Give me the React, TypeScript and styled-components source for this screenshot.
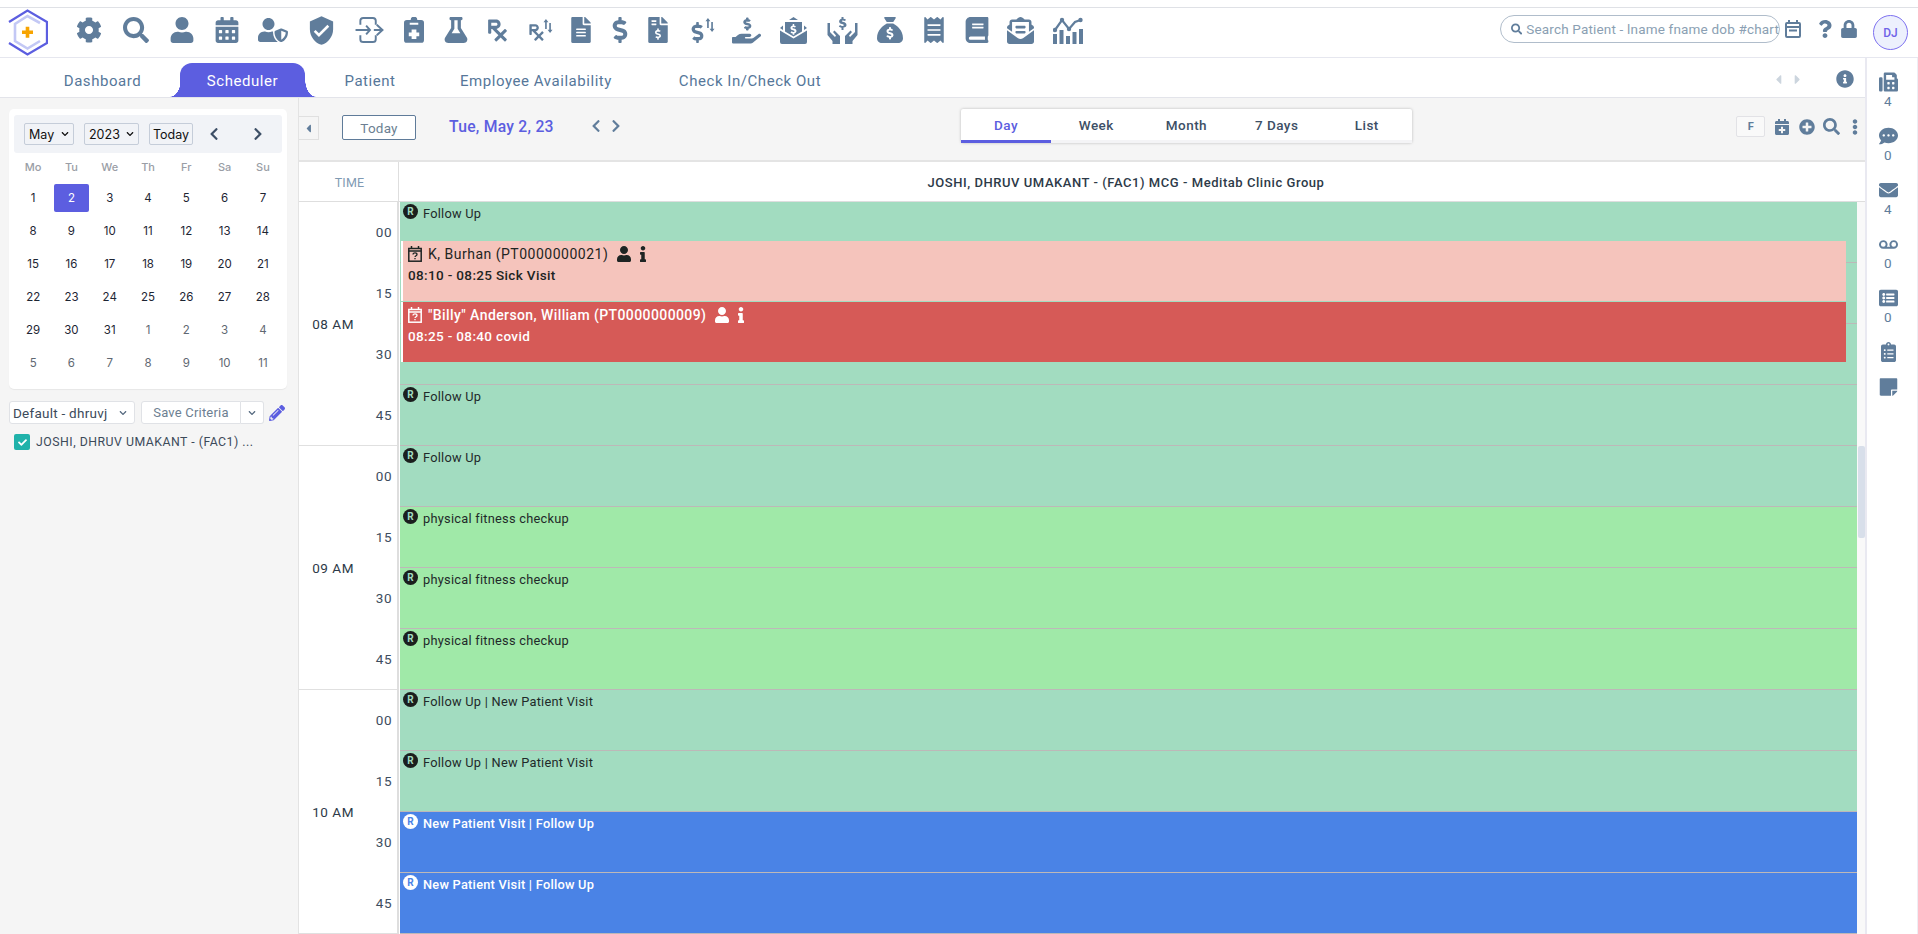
import React from 'react';
import styled, { createGlobalStyle } from 'styled-components';
import {
  FaBook,
  FaCalendarAlt,
  FaCalendarPlus,
  FaCaretLeft,
  FaCaretRight,
  FaChevronDown,
  FaChevronLeft,
  FaChevronRight,
  FaCheck,
  FaClipboardList,
  FaCommentDots,
  FaDollarSign,
  FaEllipsisV,
  FaEnvelope,
  FaEnvelopeOpenText,
  FaFax,
  FaFileAlt,
  FaFileInvoiceDollar,
  FaFlask,
  FaHandHoldingUsd,
  FaInfo,
  FaInfoCircle,
  FaListAlt,
  FaLock,
  FaPencilAlt,
  FaPlusCircle,
  FaPrescription,
  FaQuestion,
  FaReceipt,
  FaSearch,
  FaStickyNote,
  FaUser,
  FaUserShield,
  FaVoicemail,
  FaCog,
} from 'react-icons/fa';
import { FaSackDollar } from 'react-icons/fa6';
import { MdVerifiedUser } from 'react-icons/md';

const GlobalStyle = createGlobalStyle`
  html, body {
    margin: 0;
    padding: 0;
    background: #fff;
    overflow: hidden;
  }
  body {
    font-family: 'Roboto', 'Liberation Sans', sans-serif;
    color: #1f2a37;
  }
  * { box-sizing: border-box; }
`;

const ICON = '#607d9b';

const Page = styled.div`
  width: 1918px;
  height: 934px;
  display: flex;
  flex-direction: column;
  padding-top: 7px;
  overflow: hidden;
`;

const TopBar = styled.header`
  height: 51px;
  flex: none;
  display: flex;
  align-items: center;
  border-top: 1px solid #dfe1e6;
  border-bottom: 1px solid #e6e7ef;
  padding: 0 10px 0 8px;
  color: ${ICON};
`;

const Logo = styled.svg`
  width: 40px;
  height: 47px;
  margin-right: 16.8px;
  flex: none;
`;

const IconStrip = styled.nav`
  display: flex;
  align-items: center;
  font-size: 26px;
  margin-top: -5px;
  svg {
    display: block;
    flex: none;
  }
`;

const IconCell = styled.span<{ $width: number }>`
  width: ${(p) => p.$width}px;
  height: 30px;
  flex: none;
  display: flex;
  align-items: center;
  justify-content: center;
`;

const StackedIcon = styled.span<{ $size: number }>`
  display: flex;
  align-items: flex-start;
  font-size: ${(p) => p.$size}px;
  svg:first-child {
    margin-top: 4px;
  }
  svg:last-child {
    margin-left: -3px;
    margin-top: 0;
  }
`;

const TopRight = styled.div`
  margin-left: auto;
  display: flex;
  align-items: center;
  color: ${ICON};
`;

const SearchBox = styled.div`
  width: 280px;
  height: 28px;
  border: 1px solid #b0bdcb;
  border-radius: 14px;
  display: flex;
  align-items: center;
  gap: 4px;
  padding-left: 10px;
  font-size: 13.5px;
  letter-spacing: 0.18px;
  color: #8b9fb3;
  white-space: nowrap;
  margin-top: -7px;
  svg {
    color: ${ICON};
    font-size: 12px;
  }
`;

const TopAction = styled.span<{ $left: number }>`
  margin-left: ${(p) => p.$left}px;
  margin-top: -7px;
  font-size: 18px;
  display: flex;
`;

const Avatar = styled.div`
  width: 35px;
  height: 35px;
  margin-left: 15px;
  border-radius: 50%;
  border: 1px solid #7d70f0;
  background: #edf0fd;
  color: #6f63e8;
  display: flex;
  align-items: center;
  justify-content: center;
  font-size: 12px;
  font-weight: 500;
`;

const Workspace = styled.div`
  flex: 1;
  min-height: 0;
  display: flex;
`;

const WorkColumn = styled.div`
  width: 1865px;
  flex: none;
  display: flex;
  flex-direction: column;
`;

const TabBar = styled.div`
  height: 40px;
  flex: none;
  display: flex;
  align-items: flex-end;
  padding: 0 11px 0 64px;
  border-bottom: 1px solid #e3e4ea;
`;

const Tab = styled.div<{ $width: number; $left?: number; $active?: boolean }>`
  width: ${(p) => p.$width}px;
  margin-left: ${(p) => p.$left ?? 0}px;
  height: 34px;
  flex: none;
  display: flex;
  align-items: center;
  justify-content: center;
  font-size: 15px;
  letter-spacing: 0.55px;
  padding-top: 1px;
  white-space: nowrap;
  color: ${(p) => (p.$active ? '#fff' : '#56779a')};
  background: ${(p) => (p.$active ? '#5c5ee0' : 'transparent')};
  border-radius: ${(p) => (p.$active ? '12px 12px 0 0' : '0')};
  position: relative;
  ${(p) =>
    p.$active &&
    `
    &::before, &::after {
      content: '';
      position: absolute;
      bottom: 0;
      width: 11px;
      height: 18px;
      background: radial-gradient(ellipse 11px 18px at 0 0, transparent 97%, #5c5ee0 100%);
    }
    &::before { left: -10.5px; }
    &::after {
      right: -10.5px;
      background: radial-gradient(ellipse 11px 18px at 100% 0, transparent 97%, #5c5ee0 100%);
    }
  `}
`;

const TabTools = styled.div`
  margin-left: auto;
  height: 100%;
  display: flex;
  align-items: center;
  color: #ccd5de;
  font-size: 15px;
  gap: 4px;
  padding-top: 3px;
  svg:last-child {
    color: ${ICON};
    font-size: 18px;
    margin-left: 27px;
  }
`;

const Body = styled.div`
  flex: 1;
  min-height: 0;
  display: flex;
`;

const Sidebar = styled.aside`
  width: 299px;
  flex: none;
  background: #f5f5f5;
  border-right: 1px solid #e3e3e3;
  padding: 11px 11px 0 9px;
`;

const CalendarCard = styled.div`
  background: #fff;
  border-radius: 5px;
  height: 280px;
  padding: 6px 5px;
  box-shadow: 0 1px 1px rgba(0, 0, 0, 0.06);
`;

const CalendarHead = styled.div`
  height: 38px;
  background: #f1f3f7;
  border-radius: 3px;
  display: flex;
  align-items: center;
  padding-left: 10px;
  color: #3d4f66;
  font-size: 14px;
`;

const MiniSelect = styled.div<{ $width: number; $left?: number; $centered?: boolean }>`
  width: ${(p) => p.$width}px;
  margin-left: ${(p) => p.$left ?? 0}px;
  height: 22px;
  border: 1px solid #c5cdd9;
  border-radius: 2px;
  display: flex;
  align-items: center;
  justify-content: ${(p) => (p.$centered ? 'center' : 'space-between')};
  padding: 0 4px;
  font-family: 'Inter', sans-serif;
  font-size: 12.5px;
  color: #111;
  svg {
    font-size: 8px;
  }
`;

const NavChevron = styled.span<{ $left: number }>`
  margin-left: ${(p) => p.$left}px;
  display: flex;
`;

const DayGrid = styled.div`
  display: grid;
  grid-template-columns: repeat(7, 38.3px);
  grid-template-rows: 28px repeat(6, 33px);
  justify-items: center;
  align-items: center;
  font-family: 'Inter', sans-serif;
  font-size: 11.5px;
`;

const DayName = styled.span`
  color: #9a9ea6;
  font-weight: 500;
  font-size: 11px;
`;

const Day = styled.span<{ $muted?: boolean; $selected?: boolean }>`
  width: 35px;
  height: 28px;
  display: flex;
  align-items: center;
  justify-content: center;
  border-radius: 2px;
  color: ${(p) => (p.$selected ? '#fff' : p.$muted ? '#5f6872' : '#1d2533')};
  background: ${(p) => (p.$selected ? '#5c5ee0' : 'transparent')};
`;

const CriteriaRow = styled.div`
  display: flex;
  align-items: center;
  margin-top: 12px;
  height: 23px;
  color: #3c4a5a;
  font-size: 13.5px;
`;

const CriteriaSelect = styled.div`
  width: 126px;
  height: 23px;
  background: #fff;
  border: 1px solid #e0e2e6;
  border-radius: 3px;
  display: flex;
  align-items: center;
  justify-content: space-between;
  padding: 0 7px 0 3px;
  letter-spacing: 0.25px;
  svg {
    font-size: 8px;
    color: #55697f;
  }
`;

const SaveButton = styled.div`
  width: 100px;
  height: 23px;
  margin-left: 6px;
  background: #fff;
  border: 1px solid #e0e2e6;
  border-radius: 3px 0 0 3px;
  display: flex;
  align-items: center;
  justify-content: center;
  color: #6d7f92;
  font-size: 13px;
  letter-spacing: 0.2px;
`;

const SaveCaret = styled.div`
  width: 23px;
  height: 23px;
  background: #fff;
  border: 1px solid #e0e2e6;
  border-left: 0;
  border-radius: 0 3px 3px 0;
  display: flex;
  align-items: center;
  justify-content: center;
  color: #55697f;
  font-size: 8px;
`;

const EditIcon = styled.span`
  margin-left: 5px;
  color: #5c5ee0;
  font-size: 16px;
  display: flex;
`;

const ProviderRow = styled.div`
  display: flex;
  align-items: center;
  gap: 6px;
  margin: 10px 0 0 5px;
  font-size: 12.3px;
  letter-spacing: 0.5px;
  color: #3c4a5a;
  white-space: nowrap;
`;

const CheckBox = styled.span`
  width: 16px;
  height: 16px;
  border-radius: 2px;
  background: #20b2aa;
  color: #fff;
  display: flex;
  align-items: center;
  justify-content: center;
  font-size: 9px;
`;

const Main = styled.main`
  flex: 1;
  min-width: 0;
  display: flex;
  flex-direction: column;
`;

const Toolbar = styled.div`
  height: 64px;
  flex: none;
  background: #f5f5f5;
  border-bottom: 2px solid #e4e4e4;
  display: flex;
  align-items: flex-start;
  color: ${ICON};
`;

const CollapseButton = styled.div`
  width: 20px;
  height: 24px;
  margin-top: 18px;
  border: 1px solid #e0e0e0;
  border-left: 0;
  display: flex;
  align-items: center;
  justify-content: center;
  font-size: 13px;
`;

const TodayButton = styled.div`
  width: 74px;
  height: 25px;
  margin: 17px 0 0 23px;
  background: #fff;
  border: 1px solid #5f7b99;
  border-radius: 2px;
  display: flex;
  align-items: center;
  justify-content: center;
  font-size: 13.5px;
  letter-spacing: 0.2px;
  color: #6c7f92;
`;

const DateLabel = styled.div`
  margin: 18px 0 0 33px;
  width: 140px;
  font-size: 15.7px;
  line-height: 22px;
  font-weight: 500;
  letter-spacing: 0.25px;
  color: #5c5ee0;
`;

const DateNav = styled.div`
  display: flex;
  gap: 6px;
  margin: 21px 0 0 0;
  font-size: 14px;
`;

const Segments = styled.div`
  width: 451px;
  height: 34px;
  margin: 11px 0 0 338px;
  background: #fff;
  border-radius: 2px;
  box-shadow: 0 0 3px rgba(0, 0, 0, 0.25);
  display: flex;
`;

const Segment = styled.div<{ $active?: boolean }>`
  width: 90.2px;
  display: flex;
  align-items: center;
  justify-content: center;
  font-size: 13.5px;
  letter-spacing: 0.45px;
  font-weight: 500;
  color: ${(p) => (p.$active ? '#5c5ee0' : '#3d4f66')};
  border-bottom: 3px solid ${(p) => (p.$active ? '#5c5ee0' : '#f4f4f6')};
`;

const ViewTools = styled.div`
  margin-left: auto;
  margin-top: 18px;
  padding-right: 7px;
  display: flex;
  align-items: center;
  gap: 8.7px;
  font-size: 16px;
`;

const FButton = styled.div`
  width: 29px;
  height: 21px;
  border: 1px solid #e2e2e6;
  border-radius: 2px;
  background: #f9f9f9;
  display: flex;
  align-items: center;
  justify-content: center;
  font-size: 11px;
  font-weight: 700;
`;

const DotsIcon = styled(FaEllipsisV)`
  margin-left: 3px;
  font-size: 18px;
  width: 6px;
`;

const GridHead = styled.div`
  height: 40px;
  flex: none;
  display: flex;
  border-bottom: 1px solid #dedede;
  padding-right: 8px;
`;

const TimeHead = styled.div`
  width: 100px;
  flex: none;
  border-right: 1px solid #dedede;
  display: flex;
  align-items: center;
  justify-content: center;
  padding: 1px 0 0 2px;
  font-size: 12.5px;
  letter-spacing: 0.2px;
  color: #7f9ab3;
`;

const ProviderHead = styled.div`
  flex: 1;
  display: flex;
  align-items: center;
  justify-content: center;
  font-size: 13px;
  font-weight: 500;
  letter-spacing: 0.55px;
  color: #2d3a48;
  padding: 2px 4px 0 0;
`;

const GridScroll = styled.div`
  flex: 1;
  min-height: 0;
  display: flex;
  position: relative;
  padding-right: 8px;
  overflow: hidden;
`;

const ScrollTrack = styled.div`
  position: absolute;
  right: 0;
  top: 0;
  bottom: 0;
  width: 8px;
  background: #f9f9f9;
`;

const ScrollThumb = styled.div`
  position: absolute;
  right: 0;
  top: 244px;
  width: 7px;
  height: 92px;
  border-radius: 2px;
  background: #d8dfea;
`;

const TimeColumn = styled.div`
  width: 100px;
  flex: none;
  border-right: 2px solid #dedede;
`;

const HourBlock = styled.div`
  height: 244px;
  display: flex;
  border-bottom: 1px solid #e0e0e0;
`;

const HourLabel = styled.div`
  width: 55px;
  flex: none;
  display: flex;
  align-items: center;
  justify-content: flex-end;
  font-size: 13.5px;
  letter-spacing: 0.55px;
  color: #2d3a48;
`;

const QuarterColumn = styled.div`
  flex: 1;
  display: grid;
  grid-template-rows: repeat(4, 61px);
`;

const QuarterLabel = styled.div`
  display: flex;
  align-items: center;
  justify-content: flex-end;
  padding: 0 5px 2px 0;
  font-size: 13.5px;
  letter-spacing: 0.5px;
  color: #3d4d5e;
`;

const SlotColumn = styled.div`
  flex: 1;
  min-width: 0;
  position: relative;
  margin-left: 1px;
`;

const Slot = styled.div<{ $bg: string; $light?: boolean }>`
  height: 61px;
  background: ${(p) => p.$bg};
  border-bottom: 1px solid #bdb8b8;
  display: flex;
  align-items: flex-start;
  gap: 5px;
  padding: 2px 3px;
  font-size: 12.8px;
  line-height: 15px;
  letter-spacing: 0.25px;
  font-weight: ${(p) => (p.$light ? 500 : 400)};
  color: ${(p) => (p.$light ? '#fff' : '#1f2a2a')};
`;

const SlotText = styled.span`
  margin-top: 2px;
`;

const RBadge = styled.span<{ $light?: boolean }>`
  width: 15px;
  height: 15px;
  flex: none;
  border-radius: 50%;
  display: flex;
  align-items: center;
  justify-content: center;
  font-size: 10px;
  font-weight: 700;
  background: ${(p) => (p.$light ? '#fff' : '#1b1f1e')};
  color: ${(p) => (p.$light ? '#4a83e6' : '#a2dcc0')};
`;

const Appointment = styled.div<{ $top: number; $bg: string; $light?: boolean }>`
  position: absolute;
  left: 1px;
  top: ${(p) => p.$top}px;
  width: 1445px;
  height: 60px;
  background: ${(p) => p.$bg};
  border-left: 2px solid #fff;
  padding: 3px 5px;
  color: ${(p) => (p.$light ? '#fff' : '#1e2423')};
  font-weight: ${(p) => (p.$light ? 500 : 400)};
`;

const ApptTitle = styled.div<{ $tight?: boolean }>`
  display: flex;
  align-items: center;
  gap: 6px;
  height: 20px;
  font-size: 14px;
  letter-spacing: ${(p) => (p.$tight ? 0.4 : 0.5)}px;
  white-space: nowrap;
  svg {
    flex: none;
  }
`;

const ApptIcons = styled.span`
  display: flex;
  align-items: center;
  gap: 3px;
  margin-left: 2px;
  font-size: 16px;
`;

const ApptTime = styled.div`
  margin-top: 3px;
  font-size: 13.5px;
  font-weight: 500;
  letter-spacing: 0.35px;
`;

const Rail = styled.aside`
  width: 53px;
  flex: none;
  border-left: 2px solid #e9e9f1;
  border-right: 1px solid #eeeef4;
  padding: 14px 8px 0 0;
  display: flex;
  flex-direction: column;
  align-items: center;
  color: ${ICON};
`;

const RailItem = styled.div<{ $short?: boolean }>`
  height: ${(p) => (p.$short ? 35 : 54)}px;
  width: 100%;
  display: flex;
  flex-direction: column;
  align-items: center;
  font-size: 13.5px;
  letter-spacing: 0.2px;
  line-height: 15px;
  svg {
    font-size: 19px;
    height: 20px;
    margin-bottom: 2px;
  }
`;

const Brand = () => (
  <Logo viewBox="0 0 40 47">
    <path d="M1 13 19.500 1.500 39 13v21L19.500 45.500 1 34" fill="none" stroke="#5c5ee0" strokeWidth="2.300" />
    <path d="M32 14 19.500 7 7 15v17l12.500 7.500L32 32" fill="none" stroke="#c3c8f5" strokeWidth="2.600" />
    <path d="M17.700 17.800h3.600v3.700H25v3.600h-3.700v3.700h-3.600v-3.700H14v-3.600h3.700z" fill="#f7a400" />
  </Logo>
);

const SignInIcon = () => (
  <svg width="29" height="26" viewBox="0 0 29 27" fill="none" stroke="currentColor" strokeWidth="2">
    <path d="M5 8V4a3 3 0 0 1 3-3h10a3 3 0 0 1 3 3v4M5 19v4a3 3 0 0 0 3 3h10a3 3 0 0 0 3-3v-4" />
    <path d="M0 13.500h14M19 13.500h9M22 8l6 5.500-6 5.500M11 9l4 4.500-4 4.500" />
  </svg>
);

const ClipboardPlusIcon = () => (
  <svg width="20" height="26" viewBox="0 0 21 27" fill="currentColor">
    <path fillRule="evenodd" d="M3 3h4a3.500 3.500 0 0 1 7 0h4a3 3 0 0 1 3 3v18a3 3 0 0 1-3 3H3a3 3 0 0 1-3-3V6a3 3 0 0 1 3-3Zm5 10v3H5v4h3v3h5v-3h3v-4h-3v-3ZM6 6v2h9V6Z" />
  </svg>
);

const ArrowPair = () => (
  <svg width="10" height="14" viewBox="0 0 11 17" fill="currentColor">
    <path d="M3 0 6 4H4v8H2V4H0ZM8 17l-3-4h2V5h2v8h2Z" />
  </svg>
);

const EnvelopeDollarIcon = () => (
  <svg width="27" height="27" viewBox="0 0 27 27" fill="currentColor">
    <path d="M13.500 0 18 3h-9ZM0 11l3-2.500V13L0 11ZM27 11l-3-2.500V13ZM0 13.500l13.500 8 13.500-8V25a2 2 0 0 1-2 2H2a2 2 0 0 1-2-2Z" />
    <path fillRule="evenodd" d="M5 5h17v9.500l-8.500 5-8.500-5Zm9.300 2h-1.600v1.400c-1.500.4-2.300 1.400-2.200 2.500 0 1.600 1.400 2.100 2.600 2.400 1 .3 1.500.5 1.500 1 0 .5-.6.700-1.200.7-.7 0-1.400-.3-1.900-.7l-1 1.200c.6.500 1.300.9 2.200 1v1.200h1.600v-1.200c1.400-.3 2.200-1.200 2.200-2.400 0-1.700-1.500-2.200-2.700-2.500-1-.3-1.400-.5-1.400-.9 0-.4.500-.6 1-.6.600 0 1.100.2 1.600.5l.9-1.200c-.6-.4-1.200-.7-1.900-.8Z" />
  </svg>
);

const HandsDollarIcon = () => (
  <svg width="33" height="27" viewBox="0 0 32 27" fill="currentColor">
    <path d="M1 6h2.500v9l5 5 1-1.500-3-3.500 1.500-1.500 5.500 5.500V27H6v-3L1 18ZM31 6h-2.500v9l-5 5-1-1.500 3-3.500-1.500-1.500-5.500 5.500V27H26v-3l5-6Z" />
    <path d="M15 0h2v1.700c1 .1 1.800.5 2.500 1l-1 1.400c-.6-.4-1.300-.7-2-.7-.7 0-1.200.3-1.200.7 0 .5.500.7 1.700 1 1.500.4 3 1 3 2.800 0 1.400-1 2.400-3 2.700V13h-2v-2.300c-1.100-.2-2-.6-2.700-1.200l1.200-1.400c.7.500 1.500.9 2.400.9.800 0 1.400-.3 1.400-.8s-.6-.8-1.800-1.100c-1.500-.4-2.900-1-2.900-2.700 0-1.400 1.100-2.400 2.400-2.700Z" />
  </svg>
);

const ChartIcon = () => (
  <svg width="30" height="27" viewBox="0 0 30 27" fill="currentColor">
    <path d="M0 17h4v10H0ZM6.500 13h4v14h-4ZM13 19h4v8h-4ZM19.500 15h4v12h-4ZM26 12h4v15h-4Z" />
    <path d="M2 13 9 3l7 9 6-7 5.500-2" fill="none" stroke="currentColor" strokeWidth="2.200" />
    <circle cx="2" cy="13" r="2.200" />
    <circle cx="9" cy="3" r="2.200" />
    <circle cx="16" cy="12" r="2.200" />
    <circle cx="27.500" cy="3" r="2.200" />
  </svg>
);

const CalendarMinusIcon = () => (
  <svg width="16" height="18" viewBox="0 0 16 18" fill="none" stroke="currentColor" strokeWidth="2">
    <rect x="1" y="3" width="14" height="14" rx="1" />
    <path d="M1 7h14M4 0v3M12 0v3M4 10.500h8" />
  </svg>
);

const CalendarQuestionIcon = () => (
  <svg width="14" height="16" viewBox="0 0 14 16" fill="none" stroke="currentColor" strokeWidth="1.500">
    <rect x=".8" y="2.500" width="12.400" height="12.700" />
    <path d="M3.500 0v3M10.500 0v3M.8 5h12.400" />
    <path d="M5 8.500c0-1.200 1-1.700 2-1.700s2 .6 2 1.600c0 1.300-2 1.300-2 2.700M7 12v1.300" strokeWidth="1.300" />
  </svg>
);

const topIcons: [React.ReactNode, number][] = [
  [<FaCog />, 48],
  [<FaSearch />, 47.2],
  [<FaUser />, 44.5],
  [<FaCalendarAlt />, 45],
  [<FaUserShield size={30} />, 48],
  [<MdVerifiedUser size={31} />, 48.5],
  [<SignInIcon />, 46.5],
  [<ClipboardPlusIcon />, 43],
  [<FaFlask />, 41.5],
  [<FaPrescription size={25} />, 42],
  [
    <StackedIcon $size={19}>
      <FaPrescription />
      <ArrowPair />
    </StackedIcon>,
    42.5,
  ],
  [<FaFileAlt />, 40],
  [<FaDollarSign />, 37],
  [<FaFileInvoiceDollar />, 40],
  [
    <StackedIcon $size={21}>
      <FaDollarSign />
      <ArrowPair />
    </StackedIcon>,
    45,
  ],
  [<FaHandHoldingUsd size={29} />, 46.5],
  [<EnvelopeDollarIcon />, 48],
  [<HandsDollarIcon />, 49.5],
  [<FaSackDollar size={26} />, 46],
  [<FaReceipt />, 42],
  [<FaBook />, 42.5],
  [<FaEnvelopeOpenText size={27} />, 46],
  [<ChartIcon />, 48],
];

const weeks: [number, boolean][][] = [
  [1, 2, 3, 4, 5, 6, 7].map((d) => [d, false]),
  [8, 9, 10, 11, 12, 13, 14].map((d) => [d, false]),
  [15, 16, 17, 18, 19, 20, 21].map((d) => [d, false]),
  [22, 23, 24, 25, 26, 27, 28].map((d) => [d, false]),
  [29, 30, 31].map((d) => [d, false] as [number, boolean]).concat([1, 2, 3, 4].map((d) => [d, true])),
  [5, 6, 7, 8, 9, 10, 11].map((d) => [d, true]),
];

const GREEN = '#a2dcc0';
const LIME = '#a0e9a8';
const BLUE = '#4a83e6';

const slots = [
  { bg: GREEN, text: 'Follow Up' },
  { bg: GREEN, text: '' },
  { bg: GREEN, text: '' },
  { bg: GREEN, text: 'Follow Up' },
  { bg: GREEN, text: 'Follow Up' },
  { bg: LIME, text: 'physical fitness checkup' },
  { bg: LIME, text: 'physical fitness checkup' },
  { bg: LIME, text: 'physical fitness checkup' },
  { bg: GREEN, text: 'Follow Up | New Patient Visit' },
  { bg: GREEN, text: 'Follow Up | New Patient Visit' },
  { bg: BLUE, text: 'New Patient Visit | Follow Up', light: true },
  { bg: BLUE, text: 'New Patient Visit | Follow Up', light: true },
];

export default function App() {
  return (
    <Page>
      <GlobalStyle />
      <TopBar>
        <Brand />
        <IconStrip>
          {topIcons.map(([icon, width], i) => (
            <IconCell key={i} $width={width}>
              {icon}
            </IconCell>
          ))}
        </IconStrip>
        <TopRight>
          <SearchBox>
            <FaSearch />
            Search Patient - lname fname dob #chart
          </SearchBox>
          <TopAction $left={5}>
            <CalendarMinusIcon />
          </TopAction>
          <TopAction $left={14.5}>
            <FaQuestion />
          </TopAction>
          <TopAction $left={6.5}>
            <FaLock />
          </TopAction>
          <Avatar>DJ</Avatar>
        </TopRight>
      </TopBar>

      <Workspace>
        <WorkColumn>
          <TabBar>
            <Tab $width={77}>Dashboard</Tab>
            <Tab $width={125} $left={39} $active>
              Scheduler
            </Tab>
            <Tab $width={50} $left={40}>
              Patient
            </Tab>
            <Tab $width={150} $left={66}>
              Employee Availability
            </Tab>
            <Tab $width={144} $left={67}>
              Check In/Check Out
            </Tab>
            <TabTools>
              <FaCaretLeft />
              <FaCaretRight />
              <FaInfoCircle />
            </TabTools>
          </TabBar>

          <Body>
            <Sidebar>
              <CalendarCard>
                <CalendarHead>
                  <MiniSelect $width={50}>
                    May <FaChevronDown />
                  </MiniSelect>
                  <MiniSelect $width={55} $left={10}>
                    2023 <FaChevronDown />
                  </MiniSelect>
                  <MiniSelect $width={44} $left={10} $centered>
                    Today
                  </MiniSelect>
                  <NavChevron $left={14}>
                    <FaChevronLeft />
                  </NavChevron>
                  <NavChevron $left={30}>
                    <FaChevronRight />
                  </NavChevron>
                </CalendarHead>
                <DayGrid>
                  {['Mo', 'Tu', 'We', 'Th', 'Fr', 'Sa', 'Su'].map((d) => (
                    <DayName key={d}>{d}</DayName>
                  ))}
                  {weeks.flat().map(([d, muted], i) => (
                    <Day key={i} $muted={muted} $selected={i === 1}>
                      {d}
                    </Day>
                  ))}
                </DayGrid>
              </CalendarCard>
              <CriteriaRow>
                <CriteriaSelect>
                  Default - dhruvj <FaChevronDown />
                </CriteriaSelect>
                <SaveButton>Save Criteria</SaveButton>
                <SaveCaret>
                  <FaChevronDown />
                </SaveCaret>
                <EditIcon>
                  <FaPencilAlt />
                </EditIcon>
              </CriteriaRow>
              <ProviderRow>
                <CheckBox>
                  <FaCheck />
                </CheckBox>
                JOSHI, DHRUV UMAKANT - (FAC1) ...
              </ProviderRow>
            </Sidebar>

            <Main>
              <Toolbar>
                <CollapseButton>
                  <FaCaretLeft />
                </CollapseButton>
                <TodayButton>Today</TodayButton>
                <DateLabel>Tue, May 2, 23</DateLabel>
                <DateNav>
                  <FaChevronLeft />
                  <FaChevronRight />
                </DateNav>
                <Segments>
                  <Segment $active>Day</Segment>
                  <Segment>Week</Segment>
                  <Segment>Month</Segment>
                  <Segment>7 Days</Segment>
                  <Segment>List</Segment>
                </Segments>
                <ViewTools>
                  <FButton>F</FButton>
                  <FaCalendarPlus />
                  <FaPlusCircle />
                  <FaSearch size={17} />
                  <DotsIcon />
                </ViewTools>
              </Toolbar>

              <GridHead>
                <TimeHead>TIME</TimeHead>
                <ProviderHead>JOSHI, DHRUV UMAKANT - (FAC1) MCG - Meditab Clinic Group</ProviderHead>
              </GridHead>

              <GridScroll>
                <TimeColumn>
                  {['08 AM', '09 AM', '10 AM'].map((hour) => (
                    <HourBlock key={hour}>
                      <HourLabel>{hour}</HourLabel>
                      <QuarterColumn>
                        {['00', '15', '30', '45'].map((q) => (
                          <QuarterLabel key={q}>{q}</QuarterLabel>
                        ))}
                      </QuarterColumn>
                    </HourBlock>
                  ))}
                </TimeColumn>
                <SlotColumn>
                  {slots.map((slot, i) => (
                    <Slot key={i} $bg={slot.bg} $light={slot.light}>
                      {slot.text && <RBadge $light={slot.light}>R</RBadge>}
                      <SlotText>{slot.text}</SlotText>
                    </Slot>
                  ))}
                  <Appointment $top={39} $bg="#f5c4bc">
                    <ApptTitle>
                      <CalendarQuestionIcon />K, Burhan (PT0000000021)
                      <ApptIcons>
                        <FaUser />
                        <FaInfo />
                      </ApptIcons>
                    </ApptTitle>
                    <ApptTime>08:10 - 08:25 Sick Visit</ApptTime>
                  </Appointment>
                  <Appointment $top={100} $bg="#d65a57" $light>
                    <ApptTitle $tight>
                      <CalendarQuestionIcon />
                      "Billy" Anderson, William (PT0000000009)
                      <ApptIcons>
                        <FaUser />
                        <FaInfo />
                      </ApptIcons>
                    </ApptTitle>
                    <ApptTime>08:25 - 08:40 covid</ApptTime>
                  </Appointment>
                </SlotColumn>
                <ScrollTrack />
                <ScrollThumb />
              </GridScroll>
            </Main>
          </Body>
        </WorkColumn>

        <Rail>
          <RailItem>
            <FaFax />4
          </RailItem>
          <RailItem>
            <FaCommentDots />0
          </RailItem>
          <RailItem>
            <FaEnvelope />4
          </RailItem>
          <RailItem>
            <FaVoicemail />0
          </RailItem>
          <RailItem>
            <FaListAlt />0
          </RailItem>
          <RailItem $short>
            <FaClipboardList />
          </RailItem>
          <RailItem $short>
            <FaStickyNote />
          </RailItem>
        </Rail>
      </Workspace>
    </Page>
  );
}
